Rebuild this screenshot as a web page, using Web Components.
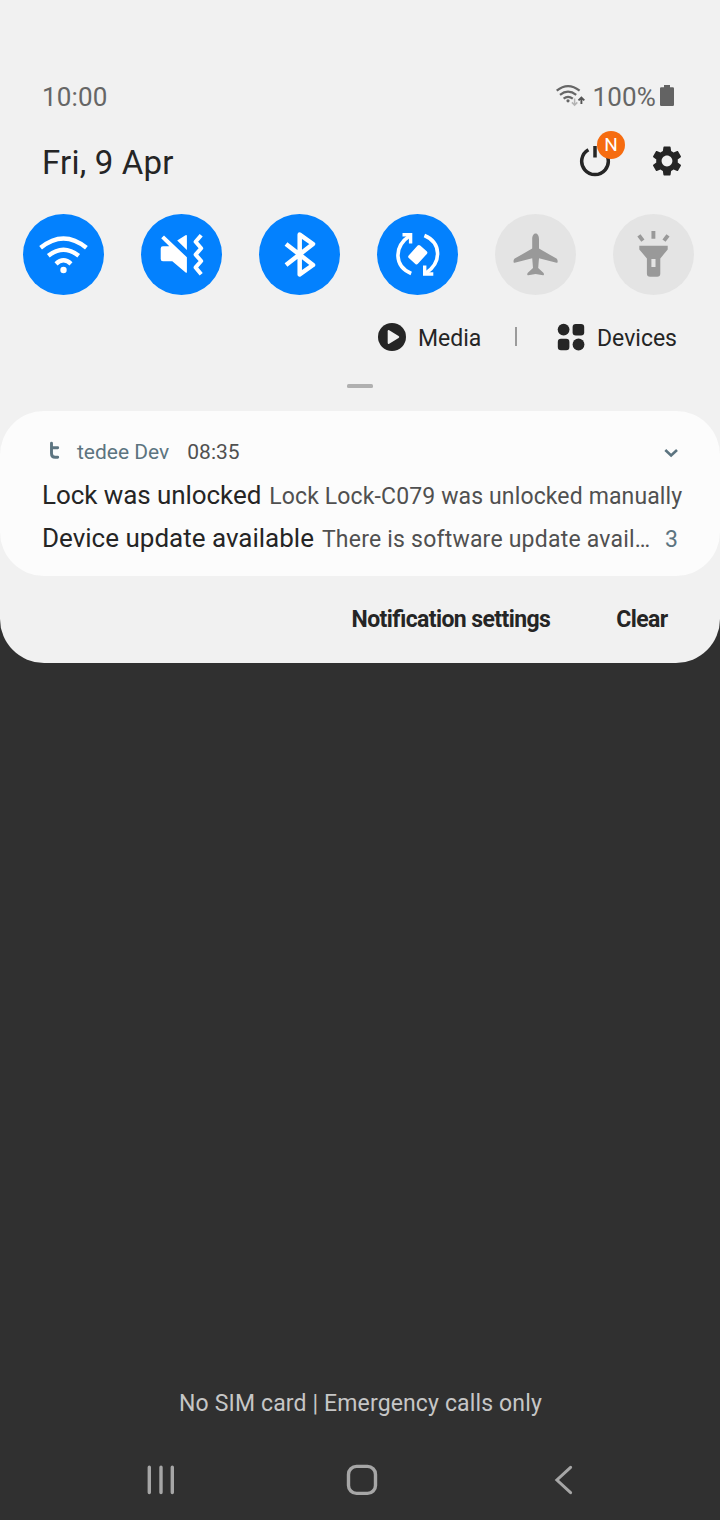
<!DOCTYPE html>
<html lang="en">
<head>
<meta charset="utf-8">
<title>Notification shade</title>
<style>
html, body { margin: 0; padding: 0; }
body { width: 720px; height: 1520px; overflow: hidden; background: #303030; font-family: Roboto, "Noto Sans", sans-serif; color: #252525; }
</style>
</head>
<body>
<phone-screen></phone-screen>
<script>
const define = (name, html) => {
  const t = document.createElement('template');
  t.innerHTML = html;
  customElements.define(name, class extends HTMLElement {
    constructor() {
      super();
      this.attachShadow({ mode: 'open' }).appendChild(t.content.cloneNode(true));
    }
  });
};

define('status-bar', `
<style>
:host { display: flex; align-items: center; height: 50px; padding: 0 45px 0 42px; color: #666; font-size: 26px; line-height: 50px; }
.time { flex: 1; letter-spacing: .15px; }
.wifi { margin-right: 7px; }
.pct { letter-spacing: .15px; margin-right: 4px; }
svg { display: block; margin-top: -2px; }
</style>
<span class="time">10:00</span>
<svg class="wifi" width="30" height="24" viewBox="555 84 30 24" fill="none" stroke="#666" stroke-width="2.200"><path d="M555.700 90.600Q567 81.600 578.600 90.600"/><path d="M559 94.800Q567 88.600 575.200 94.800"/><path d="M562.600 98.600Q567 95 571.800 98.600"/><circle cx="567" cy="100.800" r="1.600" fill="#666" stroke="none"/><path d="M573.600 98.500V105M570.900 102.400L573.600 105.100L576.300 102.400" stroke="#b4b4b4" stroke-width="1.500"/><path d="M580.400 104V98M577.500 100.400L580.400 97.500L583.300 100.400" stroke="#555" stroke-width="1.900"/></svg>
<span class="pct">100%</span>
<svg width="15" height="24" viewBox="660 84 15 24"><path fill="#636363" d="M664 85h6v2.300h2.800q1.200 0 1.200 1.200v16.300q0 1.200-1.200 1.200h-11.600q-1.200 0-1.200-1.200V88.500q0-1.200 1.200-1.200h2.800z"/></svg>
`);

define('power-button', `
<style>
:host { display: block; position: relative; width: 32px; height: 32px; }
svg { display: block; }
.badge { position: absolute; left: 18px; top: -14px; width: 28px; height: 28px; border-radius: 50%; background: #f66c10; color: #fff; font-size: 19px; line-height: 28px; text-align: center; }
</style>
<svg width="32" height="32" viewBox="579 145 32 32" fill="none" stroke="#252525" stroke-width="3.500"><path d="M588.400 149.700A13.300 13.300 0 1 0 601.600 149.700M595 146V157.400"/></svg>
<span class="badge"><slot></slot></span>
`);

define('date-header', `
<style>
:host { display: flex; align-items: center; height: 81px; padding: 0 35px 0 42px; }
.date { flex: 1; font-size: 33px; letter-spacing: .2px; }
power-button { margin: -3px 38px 0 0; }
.gear { display: block; margin-top: -3px; }
</style>
<span class="date">Fri, 9 Apr</span>
<power-button>N</power-button>
<svg class="gear" width="36" height="36" viewBox="0 0 24 24"><path fill="#252525" d="M19.140 12.940c.04-.3.060-.61.060-.94 0-.32-.020-.64-.070-.94l2.030-1.580c.18-.14.230-.41.120-.61l-1.920-3.320c-.12-.22-.370-.29-.590-.22l-2.390.96c-.5-.38-1.030-.7-1.620-.94l-.360-2.540c-.04-.24-.240-.41-.480-.41h-3.840c-.24 0-.43.17-.47.41l-.36 2.540c-.59.24-1.130.57-1.620.94l-2.390-.96c-.22-.08-.470 0-.59.22L2.740 8.870c-.12.210-.08.470.12.610l2.030 1.580c-.05.300-.09.630-.09.940s.02.640.07.940l-2.030 1.580c-.18.140-.23.410-.12.610l1.920 3.320c.12.220.370.290.59.220l2.390-.96c.5.380 1.030.700 1.620.940l.36 2.540c.05.240.240.410.480.410h3.840c.24 0 .440-.17.470-.41l.36-2.540c.59-.24 1.130-.56 1.620-.94l2.390.96c.22.080.470 0 .59-.22l1.920-3.320c.12-.22.070-.47-.12-.61l-2.010-1.580zM12 15.600c-1.980 0-3.600-1.620-3.600-3.600s1.620-3.600 3.600-3.600 3.600 1.620 3.600 3.600-1.620 3.600-3.600 3.600z"/></svg>
`);

define('quick-tile', `
<style>
:host { display: block; width: 81px; height: 81px; border-radius: 50%; background: #0381fe; color: #fff; }
:host([off]) { background: #e4e4e4; color: #999; }
</style>
<slot></slot>
`);

define('quick-tiles', `
<style>
:host { display: flex; gap: 37px; padding: 11px 26px 0 23px; height: 81px; }
svg { display: block; }
</style>
<quick-tile><svg width="81" height="81" fill="none" stroke="currentColor" stroke-width="4.400"><path d="M17.600 33.800Q40.500 15.200 63.400 33.800"/><path d="M25.300 41.800Q40.500 29.800 55.700 41.800"/><path d="M33 49.800Q40.500 42.800 48 49.800"/><circle cx="40.500" cy="56" r="3.200" fill="currentColor" stroke="none"/></svg></quick-tile>
<quick-tile><svg width="81" height="81" fill="currentColor"><path d="M20.200 24.200L23 21.400L45.900 43.300V57.900Q45.900 59.400 44.600 58.500L31.300 47.200H21.900Q19.700 47.200 19.700 45V34.500Q19.700 32.300 21.900 32.300H28.300ZM36.200 26.600L44.500 21.200Q45.900 20.500 45.900 22V36Z"/><path d="M60.200 21.300L54.600 27.800L60.200 34.200L54.600 40.600L60.200 47L54.600 53.400L60.200 60.300" fill="none" stroke="currentColor" stroke-width="4" stroke-linejoin="round"/></svg></quick-tile>
<quick-tile><svg width="81" height="81" fill="none" stroke="currentColor" stroke-width="4.500" stroke-linejoin="round"><path d="M27 30L54 51L40.700 60.400V20.600L54 30L27 51"/></svg></quick-tile>
<quick-tile><svg width="81" height="81" fill="none" stroke="currentColor" stroke-width="3.600"><rect x="34.500" y="32.200" width="12.400" height="17" rx="1.800" transform="rotate(42 40.700 40.800)" fill="currentColor" stroke="none"/><path d="M34.200 59.500C17.500 52.500 16 33 33 21.500"/><path d="M47.400 21.500C64 28.500 65.500 48 48.500 59.500"/><path d="M25.500 20.800H33.600V29.400M47.700 51.400V60H56.300" stroke-width="3.400"/></svg></quick-tile>
<quick-tile off><svg width="81" height="81" fill="currentColor"><path d="M40.600 19.500C42.800 19.500 44 22 44 25V34.600L61.500 44.600C62.800 45.500 63.300 49.400 61.500 48.800L44 44.300L43.200 54L48.600 59Q49.600 61.600 48 61.300L40.600 60L33.200 61.300Q31.600 61.600 32.600 59L38 54L37.200 44.300L19.700 48.800C17.900 49.400 18.400 45.500 19.700 44.600L37.200 34.600V25C37.200 22 38.400 19.500 40.600 19.500Z"/></svg></quick-tile>
<quick-tile off><svg width="81" height="81" fill="currentColor"><path fill-rule="evenodd" d="M26.300 31.700H54.700V35.600L47.300 44.400V59.500Q47.300 62.700 44.100 62.700H37.100Q33.900 62.700 33.900 59.500V44.400L26.300 35.600ZM38.400 45V53H42.500V45Z"/><path d="M40.400 17V24.700M25.900 21.300L29.900 26.700M55 21.300L51 26.700" fill="none" stroke="currentColor" stroke-width="3.900"/></svg></quick-tile>
`);

define('panel-links', `
<style>
:host { display: flex; align-items: center; height: 40px; margin-top: 23px; padding-left: 378px; font-size: 23px; }
svg { display: block; margin-top: -2px; }
.media { width: 98px; margin-left: 12px; }
i { width: 2px; height: 19px; margin: -3px 40px 0 -1px; background: #9b9b9b; }
.dev { margin-left: 12px; }
</style>
<svg width="28" height="28" viewBox="0 0 28 28"><circle cx="14" cy="14" r="14" fill="#252525"/><path d="M9.700 8.200Q9.700 6.400 11.200 7.300L20.600 13Q22 14 20.600 15L11.200 20.800Q9.700 21.600 9.700 19.800Z" fill="#f1f1f1"/></svg>
<span class="media">Media</span><i></i>
<svg width="28" height="28" viewBox="0 0 28 28" fill="#252525"><circle cx="6.600" cy="6.600" r="5.900"/><rect x="15.600" y=".9" width="11.600" height="11.600" rx="3.200"/><rect x=".8" y="15.700" width="11.600" height="11.600" rx="3.200"/><circle cx="21.500" cy="21.500" r="5.900"/></svg>
<span class="dev">Devices</span>
`);

define('notification-line', `
<style>
:host { display: flex; align-items: baseline; height: 43px; line-height: 43px; white-space: nowrap; color: #505050; font-size: 23px; }
.title { font-size: 26px; color: #252525; margin-right: 8px; letter-spacing: var(--title-spacing, 0); }
.text { letter-spacing: var(--text-spacing, 0); flex: 1; }
</style>
<span class="title"><slot name="title"></slot></span><span class="text"><slot></slot></span><slot name="count"></slot>
`);

define('notification-card', `
<style>
:host { display: block; box-sizing: border-box; height: 165px; margin-top: 23px; padding: 28px 38px 0 42px; border-radius: 44px; background: #fcfcfc; }
header { display: flex; align-items: center; height: 26px; margin-bottom: 9px; font-size: 21px; color: #5c7480; }
.app { margin-left: 16px; }
time { flex: 1; margin-left: 18px; color: #505050; }
svg { display: block; }
.logo { margin-left: 7px; margin-top: -2px; }
.chevron { margin-right: 1px; }
.count { color: #5c7480; margin-right: 4px; }
.a { --title-spacing: -.07px; --text-spacing: .13px; }
.b { --text-spacing: .21px; }
</style>
<header>
<svg class="logo" width="12" height="20" viewBox="49 441 12 20" fill="none" stroke="#5c7480" stroke-width="2.900" stroke-linecap="round"><path d="M51.500 443.200V453.500Q51.500 457.300 55.200 457.300H57.700M51.500 447.700H57.700"/></svg>
<span class="app">tedee Dev</span><time>08:35</time>
<svg class="chevron" width="20" height="20" viewBox="661 442 20 20" fill="none" stroke="#5c7480" stroke-width="2.600"><path d="M665.300 450L671.100 455.500L677 450"/></svg>
</header>
<notification-line class="a"><span slot="title">Lock was unlocked</span>Lock Lock-C079 was unlocked manually</notification-line>
<notification-line class="b"><span slot="title">Device update available</span>There is software update avail…<span class="count" slot="count">3</span></notification-line>
`);

define('panel-actions', `
<style>
:host { display: flex; justify-content: flex-end; align-items: center; gap: 66px; height: 87px; padding-right: 52.500px; font-size: 23px; font-weight: 700; letter-spacing: -.6px; font-feature-settings: "liga" 1; }
</style>
<span>Notification settings</span><span>Clear</span>
`);

define('shade-panel', `
<style>
:host { display: block; box-sizing: border-box; height: 663px; padding-top: 72px; border-radius: 0 0 44px 44px; background: #f1f1f1; }
.handle { width: 26px; height: 4px; margin: 26px auto 0; border-radius: 1.500px; background: #b0b0b0; }
</style>
<status-bar></status-bar><date-header></date-header><quick-tiles></quick-tiles><panel-links></panel-links>
<div class="handle"></div>
<notification-card></notification-card><panel-actions></panel-actions>
`);

define('nav-bar', `
<style>
:host { display: flex; align-items: center; height: 80px; padding-left: 144px; gap: 167px; }
svg { display: block; }
</style>
<svg width="34" height="34" viewBox="144 1463 34 34" stroke="#a6a6a6" stroke-width="3.400" stroke-linecap="round"><path d="M149.300 1467.300V1492.600M161 1467.300V1492.600M172.300 1467.300V1492.600"/></svg>
<svg width="34" height="34" viewBox="345 1463 34 34" fill="none" stroke="#a6a6a6" stroke-width="3.400"><rect x="348.500" y="1466.400" width="27" height="27" rx="8"/></svg>
<svg width="34" height="34" viewBox="546 1463 34 34" fill="none" stroke="#a6a6a6" stroke-width="3" stroke-linecap="round"><path d="M570.600 1467.300L556.900 1480L570.600 1492.700"/></svg>
`);

define('phone-screen', `
<style>
:host { display: flex; flex-direction: column; width: 720px; height: 1520px; background: #303030; }
.carrier { margin-top: auto; height: 34px; line-height: 34px; margin-bottom: 19px; padding-left: 1px; text-align: center; font-size: 23px; letter-spacing: .14px; color: #c6c6c6; }
</style>
<shade-panel></shade-panel>
<div class="carrier">No SIM card | Emergency calls only</div>
<nav-bar></nav-bar>
`);
</script>
</body>
</html>
